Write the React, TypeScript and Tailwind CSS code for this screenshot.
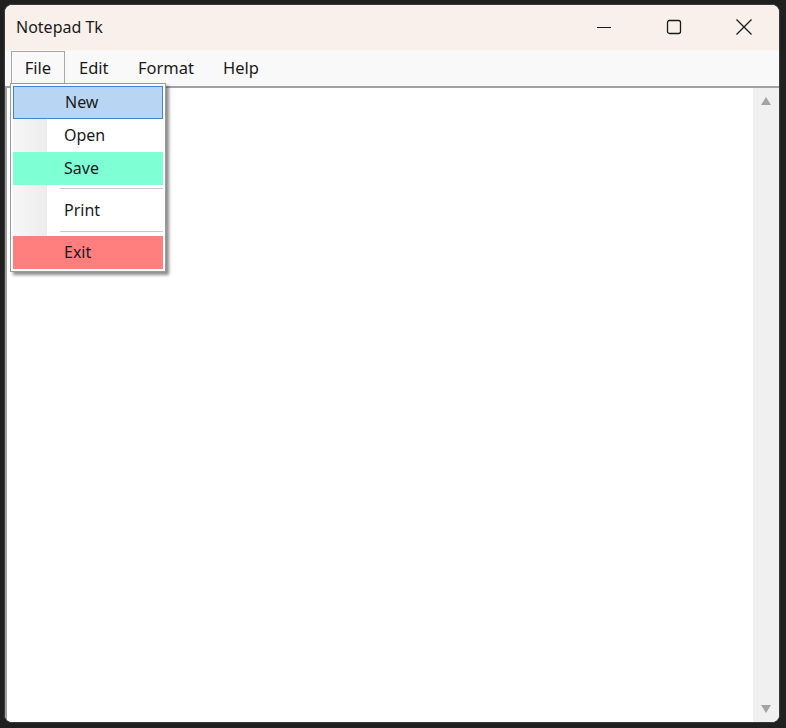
import * as React from "react";

const menuFont = { fontFamily: '"Noto Sans", "Open Sans", sans-serif' };

type Item = { label: string; className: string };

const MenuRow = ({ label, className }: Item) => (
  <div className={`flex h-[33px] items-center pb-[2px] pl-[51px] text-[16px] text-[#1a1a1a] ${className}`}>
    {label}
  </div>
);

const Separator = () => (
  <div className="flex h-[8px] items-center pl-[47px]">
    <div className="h-[2px] w-full border-t border-[#c8c8c8] bg-white" />
  </div>
);

const App = () => {
  return (
    <div className="h-[728px] w-[786px] bg-[#202020] pl-[4px] pt-[4px]" style={menuFont}>
      <div className="relative flex h-[719px] w-[776px] flex-col overflow-hidden rounded-[8px] border border-[#3a3a3a] bg-[#f9f9f9]">
        {/* title bar */}
        <div className="flex h-[45px] items-center bg-[#f9f0eb]">
          <div className="flex-1 pl-[11px] pb-[2px] text-[16px] text-[#1a1a1a]">Notepad Tk</div>
          <div className="flex h-full w-[70px] items-center justify-center pb-[2px]">
            <svg width="16" height="16" viewBox="0 0 16 16">
              <path d="M1 8.5h14" stroke="#1a1a1a" strokeWidth="1.2" />
            </svg>
          </div>
          <div className="flex h-full w-[70px] items-center justify-center pb-[2px]">
            <svg width="16" height="16" viewBox="0 0 16 16">
              <rect x="1.5" y="1.5" width="13" height="13" rx="2" fill="none" stroke="#1a1a1a" strokeWidth="1.3" />
            </svg>
          </div>
          <div className="flex h-full w-[70px] items-center justify-center pb-[2px]">
            <svg width="18" height="18" viewBox="0 0 18 18">
              <path d="M1.5 1.5l15 15M16.5 1.5l-15 15" stroke="#1a1a1a" strokeWidth="1.3" />
            </svg>
          </div>
        </div>

        {/* menu bar */}
        <div className="flex h-[38px] items-end border-b-2 border-[#a0a0a0] px-[6px] text-[16.5px] text-[#1a1a1a]">
          <div className="mb-[1px] flex h-[34px] w-[54px] items-center justify-center border border-b-0 border-[#a8a8a8] bg-[#f9f9f9]">
            File
          </div>
          <div className="mb-[1px] flex h-[34px] w-[59px] items-center pl-[14px]">Edit</div>
          <div className="mb-[1px] flex h-[34px] w-[85px] items-center pl-[14px]">Format</div>
          <div className="mb-[1px] flex h-[34px] items-center pl-[14px]">Help</div>
        </div>

        {/* text area + scrollbar */}
        <div className="flex flex-1">
          <div className="w-[2px] bg-[#a0a0a0]" />
          <div className="flex-1 bg-white" />
          <div className="flex w-[26px] flex-col items-center justify-between bg-[#f0f0f0] py-[8px]">
            <svg width="12" height="10" viewBox="0 0 12 10">
              <path d="M6 1L11 9H1z" fill="#a3a3a3" />
            </svg>
            <svg width="12" height="10" viewBox="0 0 12 10">
              <path d="M1 1h10L6 9z" fill="#a3a3a3" />
            </svg>
          </div>
        </div>

        {/* File dropdown */}
        <div className="absolute left-[5px] top-[78px] w-[156px] border border-[#9a9a9a] bg-white p-[2px] shadow-[3px_3px_3px_rgba(0,0,0,0.45)]">
          <div className="relative">
            <div className="absolute bottom-0 left-0 top-0 w-[34px] bg-gradient-to-r from-[#f7f7f7] to-[#ececec]" />
            <div className="relative">
              <MenuRow label="New" className="border border-[#3d86d6] bg-[#b8d6f3] pl-[50px]" />
              <MenuRow label="Open" className="" />
              <MenuRow label="Save" className="bg-[#7fffd4]" />
              <Separator />
              <MenuRow label="Print" className="h-[35px]" />
              <Separator />
              <MenuRow label="Exit" className="bg-[#ff7f7f]" />
            </div>
          </div>
        </div>
      </div>
    </div>
  );
};

export default App;
